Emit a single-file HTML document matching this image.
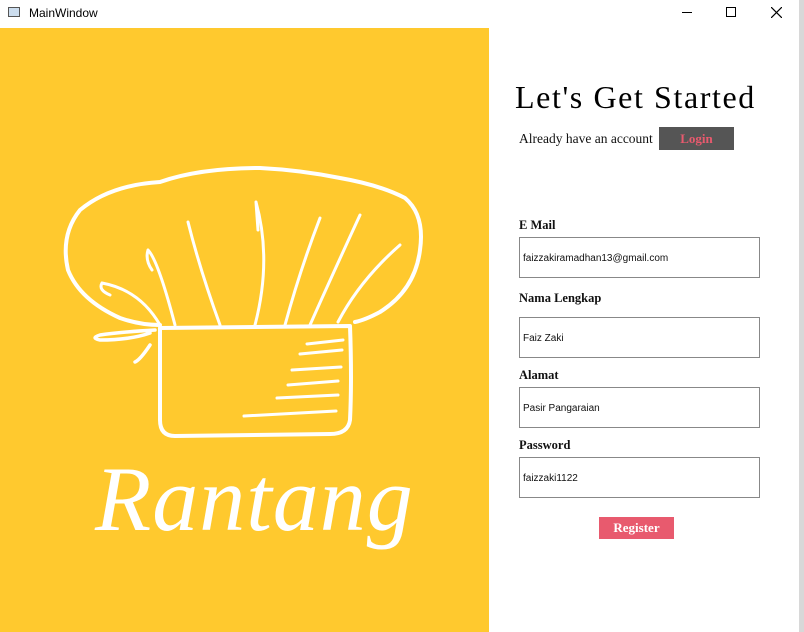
<!DOCTYPE html>
<html><head><meta charset="utf-8"><style>
body{margin:0;width:804px;height:632px;overflow:hidden;background:#fff;font-family:"Liberation Serif",serif;position:relative}
.tb{position:absolute;left:0;top:0;width:799px;height:28px;background:#fff;font-family:"Liberation Sans",sans-serif;font-size:12px}
.side{position:absolute;left:799px;top:0;width:5px;height:632px;background:#d8d8d8}
.left{position:absolute;left:0;top:28px;width:489px;height:604px;background:#ffc92e;overflow:hidden}
.lbl{position:absolute;left:519px;font-size:12.5px;color:#111;font-weight:bold}
.inp{position:absolute;left:519px;border:1px solid #888;box-sizing:border-box;width:241px;height:41px;font-family:"Liberation Sans",sans-serif;font-size:10px;padding-left:3px;line-height:42px;color:#111}
</style></head><body>
<div class="tb">
<div style="position:absolute;left:8px;top:7px;width:12px;height:10px;border:1px solid #555;box-sizing:border-box;background:#cde"></div>
<div style="position:absolute;left:29px;top:6px;color:#000">MainWindow</div>
<div style="position:absolute;left:682px;top:12px;width:10px;height:1px;background:#000"></div>
<div style="position:absolute;left:726px;top:7px;width:10px;height:10px;border:1px solid #000;box-sizing:border-box"></div>
<svg style="position:absolute;left:771px;top:7px" width="11" height="11"><path d="M0 0L11 11M11 0L0 11" stroke="#000" stroke-width="1.2"/></svg>
</div>
<div class="side"></div>
<div class="left">
<svg width="489" height="604" viewBox="0 28 489 604" fill="none" stroke="#fff" stroke-linecap="round" stroke-linejoin="round">
<path d="M160 325 Q140 325 120 318 Q80 300 68 270 Q60 235 80 210 Q110 185 160 182 Q200 168 260 168 Q300 170 340 178 Q380 185 405 198 Q425 215 420 250 Q415 290 380 312 Q365 320 355 322" stroke-width="4"/>
<path d="M160 328 L350 326 Q352 380 350 420 Q348 434 330 434 L175 436 Q160 436 160 420 Z" stroke-width="4"/>
<path d="M155 330 Q120 332 100 335 Q90 338 100 340 Q130 340 150 333 M150 345 Q140 360 135 362" stroke-width="3.5"/>
<path d="M102 283 Q140 290 160 325 M102 283 Q98 290 110 295" stroke-width="3"/>
<path d="M148 250 Q158 260 175 325 M148 250 Q145 260 152 270" stroke-width="3"/>
<path d="M188 222 Q200 270 220 325" stroke-width="3"/>
<path d="M256 202 Q272 260 255 325 M256 202 L258 230" stroke-width="3"/>
<path d="M320 218 Q300 270 285 325" stroke-width="3"/>
<path d="M360 215 Q330 280 310 325" stroke-width="3"/>
<path d="M400 245 Q360 280 338 322" stroke-width="3"/>
<path d="M307 344L343 340M300 354L342 350M292 370L341 367M288 385L338 381M277 398L338 395M244 416L336 411" stroke-width="3"/>
</svg>
<div style="position:absolute;left:95px;top:418px;font-family:'Liberation Serif',serif;font-style:italic;font-size:92px;color:#fff;letter-spacing:1px">Rantang</div>
</div>
<div style="position:absolute;left:515px;top:79px;font-size:32px;color:#000;letter-spacing:1.6px">Let's Get Started</div>
<div style="position:absolute;left:519px;top:131px;font-size:13.5px;color:#111">Already have an account</div>
<div style="position:absolute;left:659px;top:127px;width:75px;height:23px;background:#555;color:#e85a6e;font-weight:bold;font-size:13px;text-align:center;line-height:23px">Login</div>
<div class="lbl" style="top:218px">E Mail</div>
<div class="inp" style="top:237px">faizzakiramadhan13@gmail.com</div>
<div class="lbl" style="top:291px">Nama Lengkap</div>
<div class="inp" style="top:317px">Faiz Zaki</div>
<div class="lbl" style="top:368px">Alamat</div>
<div class="inp" style="top:387px">Pasir Pangaraian</div>
<div class="lbl" style="top:438px">Password</div>
<div class="inp" style="top:457px">faizzaki1122</div>
<div style="position:absolute;left:599px;top:517px;width:75px;height:22px;background:#e85a6e;color:#fff;font-weight:bold;font-size:13px;text-align:center;line-height:22px">Register</div>
</body></html>
